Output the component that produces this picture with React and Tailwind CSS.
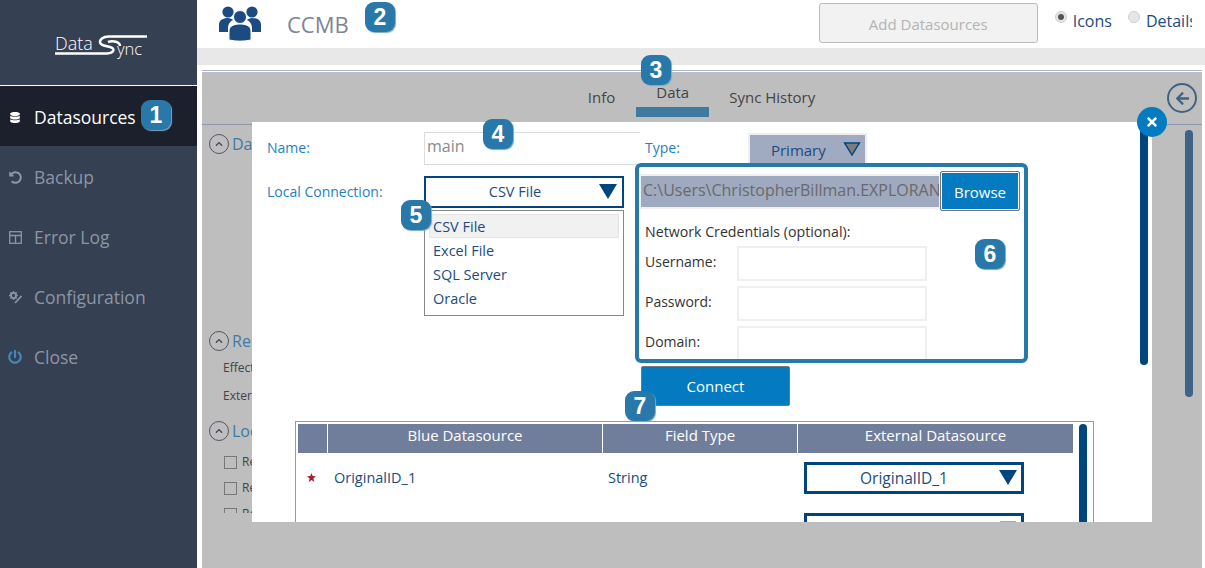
import React from "react";
import { FaDatabase, FaUndoAlt, FaPowerOff, FaChevronUp, FaArrowLeft, FaTimes } from "react-icons/fa";
import { BsGearFill } from "react-icons/bs";

const Badge = ({ n, cls }) => (
  <div className={"absolute z-30 flex h-[30px] w-[30px] items-center justify-center rounded-[9px] bg-[#2878a9] text-[23px] font-bold text-white shadow-[1px_1px_1px_#7aa8c8] " + cls} style={{ fontFamily: '"Liberation Sans", sans-serif' }}>
    {n}
  </div>
);

const NavItem = ({ icon, label, active, iconCls }) => (
  <div className={"flex h-[60px] items-center pl-[8px] pt-[2px] " + (active ? "bg-[#1c1f2c] text-white" : "text-[#8d95a5]")}>
    <span className={"flex w-[14px] justify-center " + (iconCls || "")}>{icon}</span>
    <span className="ml-[12px] text-[17.500px]">{label}</span>
  </div>
);

const Logo = () => (
  <div className="flex h-[86px] items-start border-b border-white pl-[55px] pt-[34px]">
    <div className="relative h-[24px] w-[92px] text-white">
      <span className="absolute left-0 top-[-1px] text-[18px] font-light leading-[20px]">Data</span>
      <svg viewBox="0 0 92 24" className="absolute left-0 top-0 h-[24px] w-[92px]" fill="none" stroke="#fff" strokeWidth="2.500">
        <path d="M92 2.500H54C47 2.500 45 6 45 8C45 11 50 12 55 13C60 14 60 19 52 19.500H0" />
        <path d="M53 8C58 6 65 8 65 12" />
      </svg>
      <span className="absolute left-[62px] top-[5px] text-[16.500px] font-light leading-[20px]">ync</span>
    </div>
  </div>
);

const PeopleIcon = () => (
  <svg viewBox="0 0 42 36" className="h-[36px] w-[42px]" fill="#1c4b82">
    <circle cx="9" cy="7" r="5.600" />
    <circle cx="33" cy="7" r="5.600" />
    <path d="M0 27V20C0 15 4 13 9 13C11 13 13 14 14 15C10 17 9 20 9 24V27Z" />
    <path d="M42 27V20C42 15 38 13 33 13C31 13 29 14 28 15C32 17 33 20 33 24V27Z" />
    <circle cx="21" cy="12" r="6.500" stroke="#fff" strokeWidth="1" />
    <path d="M10 35V26C10 21 15 19 21 19C27 19 32 21 32 26V35C26 36.500 16 36.500 10 35Z" stroke="#fff" strokeWidth="1" />
  </svg>
);

const ErrorLogIcon = () => (
  <svg viewBox="0 0 13 13" className="h-[13px] w-[13px]" fill="none" stroke="currentColor" strokeWidth="1.300">
    <rect x="0.700" y="0.700" width="11.600" height="11.600" />
    <path d="M0.700 4.500H12.300M6.500 4.500V12.300" />
  </svg>
);

const ConfigIcon = () => (
  <span className="relative block h-[13px] w-[13px]">
    <BsGearFill className="absolute left-0 top-0 h-[9px] w-[9px]" />
    <svg viewBox="0 0 13 13" className="absolute left-0 top-0 h-[13px] w-[13px]" fill="none" stroke="currentColor" strokeWidth="1.800">
      <path d="M12.500 5L6 12" />
    </svg>
  </span>
);

const Radio = ({ on }) => (
  <span className="flex h-[12px] w-[12px] items-center justify-center rounded-full border border-[#cfcfcf] bg-[#e6e6e6]">
    {on && <span className="h-[6px] w-[6px] rounded-full bg-[#555]" />}
  </span>
);

const Collapse = ({ label, cls }) => (
  <div className={"flex h-[22px] items-center " + (cls || "")}>
    <span className="flex h-[20px] w-[20px] items-center justify-center rounded-full border border-[#556] text-[#445]">
      <FaChevronUp className="h-[8px] w-[8px]" />
    </span>
    <span className="ml-[3px] text-[16px] text-[#3f7aa8]">{label}</span>
  </div>
);

const Tri = ({ cls }) => (
  <svg viewBox="0 0 18 15" className={"h-[15px] w-[18px] " + (cls || "")} fill="#00457e">
    <path d="M0 0H18L9 15Z" />
  </svg>
);

const Check = ({ label }) => (
  <div className="flex h-[26px] items-center pl-[15px]">
    <span className="h-[13px] w-[13px] border border-[#777]" />
    <span className="ml-[5px] text-[12px] text-[#444]">{label}</span>
  </div>
);

const Cred = ({ label }) => (
  <div className="flex h-[40px] items-center">
    <span className="w-[92px] pb-[4px] text-[14px] text-[#333]">{label}</span>
    <span className="h-[35px] w-[190px] border-2 border-[#efefef] bg-white" />
  </div>
);

export default function App() {
  return (
    <div className="relative flex h-[568px] w-[1205px] overflow-hidden bg-white" style={{ fontFamily: '"Open Sans", sans-serif' }}>
      {/* Sidebar */}
      <aside className="h-full w-[197px] shrink-0 bg-[#354052]">
        <Logo />
        <NavItem active icon={<FaDatabase className="h-[11px] w-[10px]" />} label="Datasources" />
        <NavItem icon={<FaUndoAlt className="h-[13px] w-[13px]" />} label="Backup" />
        <NavItem icon={<ErrorLogIcon />} label="Error Log" />
        <NavItem icon={<ConfigIcon />} label="Configuration" />
        <NavItem icon={<FaPowerOff className="h-[14px] w-[14px]" />} iconCls="text-[#4488b8]" label="Close" />
      </aside>

      {/* Main */}
      <main className="flex min-w-0 flex-1 flex-col">
        <header className="flex h-[48px] shrink-0 items-start">
          <div className="ml-[22px] mt-[5px]"><PeopleIcon /></div>
          <div className="ml-[26px] mt-[7px] text-[22px] leading-[34px] text-[#7d8595]">CCMB</div>
          <button className="ml-[470px] mt-[3px] h-[40px] w-[219px] rounded-[3px] border border-[#bbbbbb] bg-[#f2f2f2] pt-[2px] text-[15px] text-[#b4b4b4]">Add Datasources</button>
          <div className="ml-[17px] flex w-[137px] items-center overflow-hidden whitespace-nowrap pt-[9px] text-[16px] leading-[24px] text-[#1b4c80]">
            <div className="-mt-[9px] shrink-0"><Radio on /></div>
            <span className="ml-[6px]">Icons</span>
            <div className="-mt-[9px] ml-[16px] shrink-0"><Radio /></div>
            <span className="ml-[6px]">Details</span>
          </div>
        </header>
        <div className="h-[17px] shrink-0 bg-[#e8e8e8]" />
        <section className="ml-[5px] mr-[3px] mt-[5px] flex flex-1 flex-col border-t border-[#a9b5c9]">
          <div className="h-px shrink-0 bg-white" />
          <div className="flex min-h-0 flex-1 flex-col bg-[#bebebe]">
            <div className="flex h-[53px] shrink-0 items-start justify-center border-b border-[#8c96aa] pr-[1px]">
              <div className="flex text-[15px] text-[#444]">
                <span className="mt-[14px]">Info</span>
                <div className="ml-[21px] flex h-[45px] w-[73px] flex-col items-center border-b-[10px] border-[#3f7aa1] pt-[9px]">Data</div>
                <span className="ml-[20px] mt-[14px]">Sync History</span>
              </div>
            </div>
            <div className="h-[388px] shrink-0 overflow-hidden pl-[7px] pt-[8px]">
              <Collapse label="Data" />
              <Collapse label="Remote" cls="mt-[175px]" />
              <div className="mt-[2px] pl-[14px] text-[12px] leading-[28px] text-[#444]">
                <div>Effective</div>
                <div>External</div>
              </div>
              <Collapse label="Local" cls="mt-[10px]" />
              <div className="mt-[7px]">
                <Check label="Re" />
                <Check label="Re" />
                <Check label="Re" />
              </div>
            </div>
          </div>
        </section>
      </main>

      {/* Right rail on gray panel */}
      <div className="absolute left-[1167px] top-[83px] flex h-[30px] w-[30px] items-center justify-center rounded-full border-2 border-[#3f6385] text-[#3f6385]">
        <FaArrowLeft className="h-[15px] w-[15px]" />
      </div>
      <div className="absolute left-[1185px] top-[130px] h-[267px] w-[8px] rounded-full bg-[#3f6385]" />

      {/* Modal */}
      <div className="absolute left-[252px] top-[122px] z-10 h-[400px] w-[900px] overflow-hidden bg-white">
        <div className="flex">
          <div className="w-[172px] shrink-0 pl-[15px] text-[14px] text-[#1f7fc0]">
            <div className="mt-[16px] leading-[20px]">Name:</div>
            <div className="mt-[24px] leading-[20px]">Local Connection:</div>
          </div>
          <div className="w-[200px] shrink-0 pt-[10px]">
            <div className="flex h-[33px] w-[216px] items-center border border-r-0 border-[#dcdcdc] pb-[6px] pl-[2px] text-[16px] text-[#8a8a8a]">main</div>
            <div className="mt-[11px] flex h-[32px] w-[200px] items-center border-2 border-[#00457e] pb-px text-[14.500px] text-[#1b4c80]">
              <span className="flex-1 pl-[5px] text-center">CSV File</span>
              <Tri cls="mr-[5px]" />
            </div>
            <div className="mt-[2px] h-[106px] w-[200px] border border-[#888] px-[4px] pt-[3px] text-[14.500px] leading-[24px] text-[#1b4c80]">
              <div className="mb-px h-[24px] border border-[#e4e4e4] bg-[#f1f1f1] pl-[3px] leading-[24px]">CSV File</div>
              <div className="pl-[4px]">Excel File</div>
              <div className="pl-[4px]">SQL Server</div>
              <div className="pl-[4px]">Oracle</div>
            </div>
          </div>
          <div className="shrink-0 pt-[11px]">
            <div className="flex h-[30px]">
              <span className="ml-[21px] mt-[5px] text-[14px] leading-[20px] text-[#1f7fc0]">Type:</span>
              <div className="ml-[68px] flex h-[32px] w-[119px] items-center justify-center border-2 border-b-0 border-[#eeeeee] bg-[#a0aac0] pr-[18px] pt-px text-[15px] text-[#1b4c80]">
                <span>Primary</span>
                <svg viewBox="0 0 18 15" className="absolute left-[591px] top-[20px] h-[14px] w-[18px]" fill="#7d7d7d" stroke="#00457e" strokeWidth="1.500">
                  <path d="M1 1H17L9 14Z" />
                </svg>
              </div>
            </div>
            <div className="relative z-10 ml-[11px] h-[200px] w-[393px] overflow-hidden rounded-[6px] border-4 border-[#2878a9] bg-white pl-[2px]">
              <div className="flex items-start pt-[4px]">
                <div className="mt-[5px] h-[31px] w-[298px] overflow-hidden whitespace-nowrap bg-[#9fa9bf] pl-[2px] text-[16px] leading-[29px] text-[#6a6a6a] ring-2 ring-[#f0f0f0]">C:\Users\ChristopherBillman.EXPLORAN</div>
                <button className="relative ml-px h-[40px] w-[80px] rounded-[2px] border-[1.500px] border-[#777] bg-[#047bc0] pt-[3px] text-[15px] text-white ring-1 ring-inset ring-white">Browse</button>
              </div>
              <div className="ml-[4px] mt-[11px] text-[14.200px] leading-[20px] text-[#333]">Network Credentials (optional):</div>
              <div className="ml-[4px] mt-[1px]">
                <Cred label="Username:" />
                <Cred label="Password:" />
                <Cred label="Domain:" />
              </div>
            </div>
            <button className="ml-[17px] mt-[3px] h-[40px] w-[149px] rounded-[2px] border-[1.500px] border-[#777] bg-[#047bc0] pt-px text-[15px] text-white">Connect</button>
          </div>
        </div>

        {/* Table */}
        <div className="ml-[43px] mt-[15px] h-[120px] w-[799px] border border-b-0 border-[#999] pl-[2px] pt-[2px]">
          <div className="flex">
            <div className="w-[775px] shrink-0">
              <div className="grid h-[29px] grid-cols-[29px_274px_194px_275px] gap-x-px bg-white text-center text-[15px] leading-[22px] text-white">
                <div className="bg-[#717e9b]" />
                <div className="bg-[#717e9b]">Blue Datasource</div>
                <div className="bg-[#717e9b]">Field Type</div>
                <div className="bg-[#717e9b]">External Datasource</div>
              </div>
              <div className="grid grid-cols-[29px_274px_194px_275px] gap-x-px pt-[9px] text-[14.500px] text-[#1b4c80]">
                <div className="flex h-[32px] items-center justify-center pb-[2px] pr-[2px]">
                  <svg viewBox="0 0 10 10" className="h-[9px] w-[9px]" fill="#a82030">
                    <path d="M5 0L6.300 3.400L10 3.700L7.100 6L8.100 10L5 7.800L1.900 10L2.900 6L0 3.700L3.700 3.400Z" />
                  </svg>
                </div>
                <div className="flex h-[32px] items-center pb-px pl-[6px]">OriginalID_1</div>
                <div className="flex h-[32px] items-center pb-px pl-[5px]">String</div>
                <div className="pl-[6px]">
                  <div className="flex h-[32px] w-[220px] items-center border-[3px] border-[#00457e] pt-px text-[15.500px]">
                    <span className="flex-1 pl-[2px] text-center">OriginalID_1</span>
                    <Tri cls="mb-[3px] mr-[4px]" />
                  </div>
                  <div className="mt-[19px] flex h-[32px] w-[220px] items-start justify-end border-[3px] border-[#00457e] pr-[5px] pt-[5px]">
                    <span className="h-[15px] w-[16px] bg-[#9fa9bf]" />
                  </div>
                </div>
              </div>
            </div>
            <div className="ml-[6px] h-[110px] w-[8px] shrink-0 rounded-full bg-[#00457e]" />
          </div>
        </div>

        {/* Modal scrollbar */}
        <div className="absolute left-[888px] top-[3px] h-[240px] w-[8px] rounded-b-full bg-[#00457e]" />
      </div>

      {/* Modal close button */}
      <div className="absolute left-[1137px] top-[107px] z-20 flex h-[30px] w-[30px] items-center justify-center rounded-full bg-[#047bc0] text-white">
        <FaTimes className="h-[14px] w-[14px]" />
      </div>

      <Badge n="1" cls="left-[141px] top-[100px]" />
      <Badge n="2" cls="left-[365px] top-[2px]" />
      <Badge n="3" cls="left-[641px] top-[55px]" />
      <Badge n="4" cls="left-[483px] top-[119px]" />
      <Badge n="5" cls="left-[401px] top-[200px]" />
      <Badge n="6" cls="left-[975px] top-[239px]" />
      <Badge n="7" cls="left-[625px] top-[391px]" />
    </div>
  );
}
